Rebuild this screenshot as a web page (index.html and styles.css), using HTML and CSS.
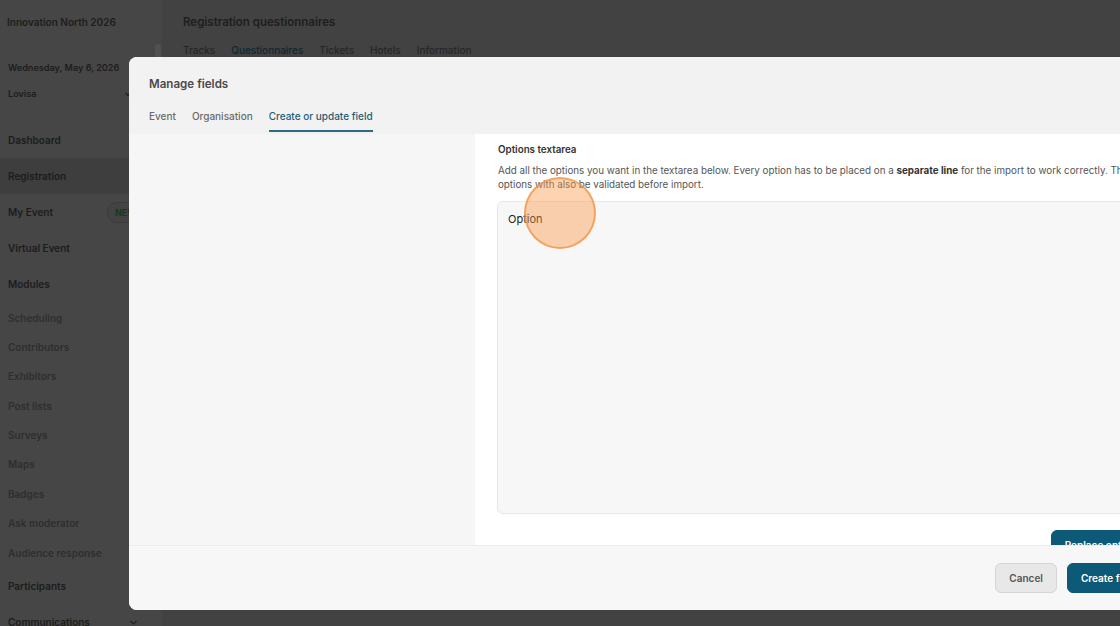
FILE: index.html
```html
<!DOCTYPE html>
<html>
<head>
    <title>Registration questionnaires</title>
    <link rel="stylesheet" href="styles.css">
</head>
<body>
    <!-- Page behind the modal (dimmed) -->
    <div class="app">
        <aside class="sidebar">
            <div class="event-name">Innovation North 2026</div>
            <div class="event-date">Wednesday, May 6, 2026</div>
            <div class="user-row">
                <span>Lovisa</span>
                <svg class="user-caret" width="8" height="8" viewBox="0 0 8 8"><path d="M1.5 3l2.5 2.5L6.5 3" fill="none" stroke="#1e1e1e" stroke-width="1.2"/></svg>
            </div>
            <div class="scroll-thumb"></div>

            <nav class="nav">
                <div class="nav-item">Dashboard</div>
                <div class="nav-item active">Registration</div>
                <div class="nav-item">My Event <span class="badge-new">NEW</span></div>
                <div class="nav-item">Virtual Event</div>
                <div class="nav-item">Modules</div>
                <div class="sub-list">
                    <div class="sub-item">Scheduling</div>
                    <div class="sub-item">Contributors</div>
                    <div class="sub-item">Exhibitors</div>
                    <div class="sub-item">Post lists</div>
                    <div class="sub-item">Surveys</div>
                    <div class="sub-item">Maps</div>
                    <div class="sub-item">Badges</div>
                    <div class="sub-item">Ask moderator</div>
                    <div class="sub-item">Audience response</div>
                </div>
                <div class="nav-item">Participants</div>
                <div class="nav-item">Communications
                    <svg class="nav-caret" width="9" height="9" viewBox="0 0 9 9"><path d="M1.5 3l3 3 3-3" fill="none" stroke="#222" stroke-width="1.2"/></svg>
                </div>
            </nav>
        </aside>

        <main class="main">
            <h1 class="page-title">Registration questionnaires</h1>
            <div class="page-tabs">
                <span>Tracks</span>
                <span class="current">Questionnaires</span>
                <span>Tickets</span>
                <span>Hotels</span>
                <span>Information</span>
            </div>
        </main>
    </div>

    <!-- Manage fields modal -->
    <div class="modal">
        <div class="modal-head">
            <h2>Manage fields</h2>
            <div class="modal-tabs">
                <span class="tab">Event</span>
                <span class="tab">Organisation</span>
                <span class="tab active">Create or update field</span>
            </div>
        </div>

        <div class="modal-body">
            <div class="side-col"></div>
            <div class="form-col">
                <div class="field-label">Options textarea</div>
                <p class="field-help">Add all the options you want in the textarea below. Every option has to be placed on a <b>separate line</b> for the import to work correctly. The options with also be validated before import.</p>
                <div class="options-box">Option</div>
                <div class="form-actions">
                    <button class="btn primary">Replace options</button>
                </div>
            </div>
        </div>

        <div class="modal-foot">
            <button class="btn secondary">Cancel</button>
            <button class="btn primary">Create field</button>
        </div>
    </div>

    <!-- click highlight -->
    <div class="click-dot"></div>
</body>
</html>
```

FILE: styles.css
```css
body {
    margin: 0;
    height: 626px;
    overflow: hidden;
    font-family: Inter, "Liberation Sans", sans-serif;
    background: #3f3f3f;
}

/* Dimmed page */
.app {
    display: flex;
    height: 626px;
}

.sidebar {
    position: relative;
    width: 162px;
    flex-shrink: 0;
    background: #464646;
    color: #1d1d1d;
    font-size: 10px;
    font-weight: 600;
}
.event-name {
    height: 44px;
    line-height: 44px;
    padding-left: 7px;
}
.event-date {
    margin-top: 14px;
    height: 20px;
    line-height: 20px;
    padding-left: 8px;
    font-size: 9.1px;
}
.user-row {
    position: relative;
    margin-top: 6px;
    height: 20px;
    line-height: 20px;
    padding-left: 8px;
    font-size: 9.1px;
}
.user-caret {
    position: absolute;
    left: 124px;
    top: 6px;
}
.scroll-thumb {
    position: absolute;
    left: 155px;
    top: 44px;
    width: 6px;
    height: 16px;
    border-radius: 3px;
    background: #505050;
}

.nav {
    margin-top: 18px;
}
.nav-item {
    position: relative;
    height: 36px;
    line-height: 36px;
    padding-left: 8px;
    color: #1c1c1c;
}
.nav-item.active {
    background: #3e3e3e;
}
.badge-new {
    position: absolute;
    left: 107px;
    top: 8px;
    height: 19px;
    line-height: 19px;
    padding: 0 7px;
    border: 1px solid #3b3b3b;
    border-radius: 10px;
    background: #434343;
    color: #163a1f;
    font-size: 9px;
    font-weight: 700;
}
.nav-caret {
    position: absolute;
    left: 129px;
    top: 14px;
}
.sub-list {
    padding-top: 1.5px;
}
.sub-item {
    height: 29.4px;
    line-height: 29.4px;
    padding-left: 8px;
    color: #2e2e2e;
    font-weight: 600;
}

.main {
    flex: 1;
    padding-left: 21px;
    background: #424242;
}
.page-title {
    margin: 0;
    padding-top: 1px;
    height: 43px;
    line-height: 43px;
    font-size: 11.5px;
    font-weight: 600;
    color: #1e1e1e;
}
.page-tabs {
    display: flex;
    gap: 16px;
    height: 12px;
    line-height: 12px;
    font-size: 10px;
    font-weight: 500;
    color: #262626;
}
.page-tabs .current {
    color: #10262f;
}

/* Modal */
.modal {
    position: fixed;
    left: 129px;
    top: 57px;
    width: 1047px;
    height: 553px;
    display: flex;
    flex-direction: column;
    background: #fff;
    border-radius: 8px;
    overflow: hidden;
}
.modal-head {
    height: 77px;
    padding-left: 20px;
    background: #f2f2f2;
    box-sizing: border-box;
}
.modal-head h2 {
    margin: 0;
    padding-top: 18px;
    height: 18px;
    line-height: 18px;
    font-size: 11.6px;
    font-weight: 600;
    color: #4a4a4a;
}
.modal-tabs {
    display: flex;
    gap: 16px;
    margin-top: 14px;
}
.tab {
    height: 25px;
    line-height: 18px;
    font-size: 10px;
    font-weight: 500;
    color: #6a6a6a;
    box-sizing: border-box;
}
.tab.active {
    color: #1f5d77;
    border-bottom: 2px solid #2f6a83;
}

.modal-body {
    flex: 1;
    display: flex;
    overflow: hidden;
}
.side-col {
    width: 346px;
    flex-shrink: 0;
    background: #f6f6f6;
}
.form-col {
    flex: 1;
    padding: 9px 20px 0 23px;
    background: #fff;
}
.field-label {
    height: 14px;
    line-height: 14px;
    font-size: 9.8px;
    font-weight: 600;
    color: #333;
}
.field-help {
    margin: 7px 0 9px;
    line-height: 14px;
    font-size: 9.8px;
    color: #555;
}
.field-help b {
    color: #333;
}
.options-box {
    margin-left: -1px;
    height: 313px;
    box-sizing: border-box;
    padding: 10px 10px;
    background: #f7f7f7;
    border: 1px solid #e6e6e6;
    border-radius: 6px;
    font-size: 11px;
    color: #222;
}
.form-actions {
    display: flex;
    justify-content: flex-end;
    margin-top: 16px;
}

.modal-foot {
    height: 65px;
    display: flex;
    align-items: center;
    justify-content: flex-end;
    gap: 10px;
    padding-right: 25px;
    background: #f7f7f7;
    border-top: 1px solid #ececec;
    box-sizing: border-box;
}

.btn {
    height: 30px;
    padding: 0 13px;
    border-radius: 6px;
    font-family: Inter, "Liberation Sans", sans-serif;
    font-size: 10px;
    font-weight: 600;
    cursor: pointer;
}
.btn.primary {
    background: #0d5a78;
    border: 1px solid #0d5a78;
    color: #fff;
}
.btn.secondary {
    background: #e8e8e8;
    border: 1px solid #d6d6d6;
    color: #555;
}

/* Click highlight */
.click-dot {
    position: fixed;
    left: 524px;
    top: 177px;
    width: 68px;
    height: 68px;
    border-radius: 50%;
    background: rgba(250, 150, 70, 0.42);
    border: 2px solid rgba(243, 150, 70, 0.75);
}
```
